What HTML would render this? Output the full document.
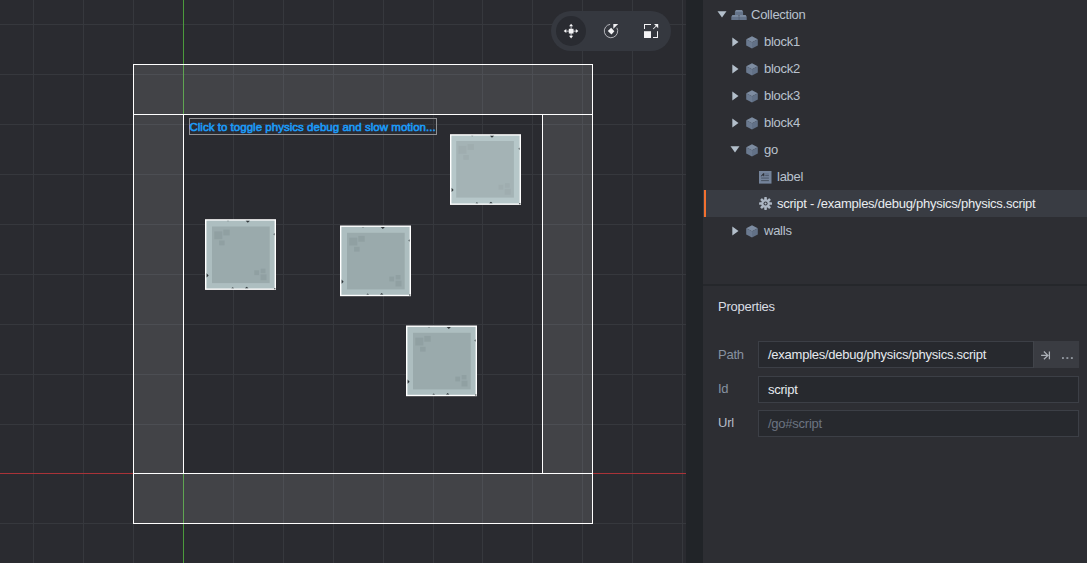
<!DOCTYPE html>
<html>
<head>
<meta charset="utf-8">
<title>Defold Editor</title>
<style>
*{box-sizing:border-box;margin:0;padding:0}
html,body{width:1087px;height:563px;overflow:hidden;background:#2a2b30}
body{position:relative;font-family:"Liberation Sans",sans-serif;font-size:13px;letter-spacing:-0.25px;color:#b9c2ce}
#scene{position:absolute;left:0;top:0;width:686px;height:563px;display:block}
#gutter{position:absolute;left:686px;top:0;width:17px;height:563px;background:#212428}
#panel{position:absolute;left:703px;top:0;width:384px;height:563px;background:#2d2e33}
#lbl{position:absolute;left:189px;top:118px;width:248px;height:17px;border:1px solid #8f9093;color:#1b9dfb;font-weight:400;font-size:11.5px;letter-spacing:0.03px;-webkit-text-stroke:0.55px #1b9dfb;line-height:17px;white-space:nowrap;text-indent:-0.6px}
.row{position:absolute;left:0;width:384px;height:27px;line-height:27px;white-space:nowrap}
.row span{position:absolute;top:0}
.row svg{position:absolute}
.sel{background:#393c43;color:#e9ecf0}
.sel:before{content:"";position:absolute;left:1px;top:0;width:2px;height:27px;background:#f2702f}
#divider{position:absolute;left:0;top:284px;width:384px;height:2px;background:#25272b}
.plabel{position:absolute;left:15px;color:#8792a1;height:27px;line-height:27px}
.field{position:absolute;left:55px;width:321px;height:27px;border:1px solid #3c3f46;background:#27292e;color:#e6e9ee;line-height:25px;padding-left:9px;white-space:nowrap}
#pbtn{position:absolute;left:330px;top:341px;width:46px;height:27px;background:#3a3c42;border-left:1px solid #41444a}
#pbtn svg{display:block;margin-left:-1px}
</style>
</head>
<body>
<svg id="scene" width="686" height="563" viewBox="0 0 686 563" shape-rendering="crispEdges">
<g><rect x="33" y="0" width="1" height="563" fill="#36383d" /><rect x="83" y="0" width="1" height="563" fill="#36383d" /><rect x="133" y="0" width="1" height="563" fill="#36383d" /><rect x="233" y="0" width="1" height="563" fill="#36383d" /><rect x="283" y="0" width="1" height="563" fill="#36383d" /><rect x="333" y="0" width="1" height="563" fill="#36383d" /><rect x="383" y="0" width="1" height="563" fill="#36383d" /><rect x="433" y="0" width="1" height="563" fill="#36383d" /><rect x="482" y="0" width="1" height="563" fill="#36383d" /><rect x="532" y="0" width="1" height="563" fill="#36383d" /><rect x="582" y="0" width="1" height="563" fill="#36383d" /><rect x="632" y="0" width="1" height="563" fill="#36383d" /><rect x="682" y="0" width="1" height="563" fill="#36383d" /><rect x="0" y="24" width="686" height="1" fill="#36383d" /><rect x="0" y="74" width="686" height="1" fill="#36383d" /><rect x="0" y="124" width="686" height="1" fill="#36383d" /><rect x="0" y="174" width="686" height="1" fill="#36383d" /><rect x="0" y="224" width="686" height="1" fill="#36383d" /><rect x="0" y="274" width="686" height="1" fill="#36383d" /><rect x="0" y="324" width="686" height="1" fill="#36383d" /><rect x="0" y="374" width="686" height="1" fill="#36383d" /><rect x="0" y="424" width="686" height="1" fill="#36383d" /><rect x="0" y="523" width="686" height="1" fill="#36383d" /></g>
<rect x="183" y="0" width="1" height="563" fill="#4b9a3c" />
<rect x="0" y="473" width="686" height="1" fill="#a93338" />
<rect x="133" y="64" width="460" height="51" fill="rgba(255,255,255,0.115)" />
<rect x="133" y="473" width="460" height="51" fill="rgba(255,255,255,0.115)" />
<rect x="133" y="114" width="51" height="360" fill="rgba(255,255,255,0.115)" />
<rect x="542" y="114" width="51" height="360" fill="rgba(255,255,255,0.115)" />
<rect x="133" y="64" width="460" height="1" fill="#ffffff" />
<rect x="133" y="114" width="460" height="1" fill="#ffffff" />
<rect x="133" y="473" width="460" height="1" fill="#ffffff" />
<rect x="133" y="523" width="460" height="1" fill="#ffffff" />
<rect x="133" y="64" width="1" height="460" fill="#ffffff" />
<rect x="592" y="64" width="1" height="460" fill="#ffffff" />
<rect x="183" y="114" width="1" height="360" fill="#ffffff" />
<rect x="542" y="114" width="1" height="360" fill="#ffffff" />
<g shape-rendering="geometricPrecision"><rect x="450" y="134.2" width="71" height="70.7" fill="#ffffff" /><rect x="451.4" y="135.6" width="68.2" height="67.9" fill="#b6c7c9" /><rect x="456.2" y="141" width="57.7" height="56.6" fill="#a4b3b5" /><rect x="458.5" y="145.9" width="8" height="7.8" fill="#9fadaf" /><rect x="467.5" y="144.1" width="6.4" height="5.8" fill="#9fadaf" /><rect x="463.3" y="155" width="5.5" height="4.8" fill="#9fadaf" /><rect x="498.5" y="184.8" width="4.8" height="4.8" fill="#9fadaf" /><rect x="504.9" y="183.2" width="4.8" height="4.5" fill="#9fadaf" /><rect x="504.7" y="188.9" width="6" height="5.8" fill="#9fadaf" /><path d="M489.9 135.7h4.2l-2.1 2z" fill="#2f3538"/><path d="M451.6 187.8v4.2l2 -2.1z" fill="#2f3538"/><path d="M489.2 203.3h3.4l-1.7 -1.5z" fill="#2f3538"/><path d="M475.6 203.3h2.6l-1.3 -1z" fill="#2f3538"/><path d="M519.5 147.4v2.6l-1 -1.3z" fill="#2f3538"/><path d="M471 135.7h2.4l-1.2 0.8z" fill="#2f3538" opacity=".5"/><rect x="519.2" y="203.1" width="1.2" height="1.2" fill="#2f3538"/></g>
<g shape-rendering="geometricPrecision"><rect x="205" y="219.2" width="71" height="70.7" fill="#ffffff" /><rect x="206.4" y="220.6" width="68.2" height="67.9" fill="#adbec0" /><rect x="212.0" y="226.5" width="57.7" height="56.6" fill="#9aaaac" /><rect x="214.3" y="231.4" width="8" height="7.8" fill="#90a0a2" /><rect x="223.3" y="229.6" width="6.4" height="5.8" fill="#90a0a2" /><rect x="219.10000000000002" y="240.5" width="5.5" height="4.8" fill="#90a0a2" /><rect x="254.3" y="270.3" width="4.8" height="4.8" fill="#90a0a2" /><rect x="260.7" y="268.7" width="4.8" height="4.5" fill="#90a0a2" /><rect x="260.5" y="274.4" width="6" height="5.8" fill="#90a0a2" /><path d="M245.70000000000002 220.7h4.2l-2.1 2z" fill="#2f3538"/><path d="M206.6 273.3v4.2l2 -2.1z" fill="#2f3538"/><path d="M245.0 288.3h3.4l-1.7 -1.5z" fill="#2f3538"/><path d="M231.4 288.3h2.6l-1.3 -1z" fill="#2f3538"/><path d="M274.5 232.9v2.6l-1 -1.3z" fill="#2f3538"/><path d="M226.8 220.7h2.4l-1.2 0.8z" fill="#2f3538" opacity=".5"/><rect x="274.2" y="288.1" width="1.2" height="1.2" fill="#2f3538"/></g>
<g shape-rendering="geometricPrecision"><rect x="340" y="225.5" width="71" height="70.7" fill="#ffffff" /><rect x="341.4" y="226.9" width="68.2" height="67.9" fill="#adbec0" /><rect x="347.0" y="232.8" width="57.7" height="56.6" fill="#9aaaac" /><rect x="349.3" y="237.70000000000002" width="8" height="7.8" fill="#90a0a2" /><rect x="358.3" y="235.9" width="6.4" height="5.8" fill="#90a0a2" /><rect x="354.1" y="246.8" width="5.5" height="4.8" fill="#90a0a2" /><rect x="389.3" y="276.6" width="4.8" height="4.8" fill="#90a0a2" /><rect x="395.7" y="275.0" width="4.8" height="4.5" fill="#90a0a2" /><rect x="395.5" y="280.7" width="6" height="5.8" fill="#90a0a2" /><path d="M380.7 227.0h4.2l-2.1 2z" fill="#2f3538"/><path d="M341.6 279.6v4.2l2 -2.1z" fill="#2f3538"/><path d="M380.0 294.6h3.4l-1.7 -1.5z" fill="#2f3538"/><path d="M366.40000000000003 294.6h2.6l-1.3 -1z" fill="#2f3538"/><path d="M409.5 239.20000000000002v2.6l-1 -1.3z" fill="#2f3538"/><path d="M361.8 227.0h2.4l-1.2 0.8z" fill="#2f3538" opacity=".5"/><rect x="409.2" y="294.4" width="1.2" height="1.2" fill="#2f3538"/></g>
<g shape-rendering="geometricPrecision"><rect x="406" y="325.5" width="71" height="70.7" fill="#ffffff" /><rect x="407.4" y="326.90000000000003" width="68.2" height="67.9" fill="#adbec0" /><rect x="413.0" y="332.8" width="57.7" height="56.6" fill="#9aaaac" /><rect x="415.3" y="337.7" width="8" height="7.8" fill="#90a0a2" /><rect x="424.3" y="335.90000000000003" width="6.4" height="5.8" fill="#90a0a2" /><rect x="420.1" y="346.8" width="5.5" height="4.8" fill="#90a0a2" /><rect x="455.3" y="376.6" width="4.8" height="4.8" fill="#90a0a2" /><rect x="461.7" y="375.0" width="4.8" height="4.5" fill="#90a0a2" /><rect x="461.5" y="380.7" width="6" height="5.8" fill="#90a0a2" /><path d="M446.7 327.0h4.2l-2.1 2z" fill="#2f3538"/><path d="M407.6 379.6v4.2l2 -2.1z" fill="#2f3538"/><path d="M446.0 394.6h3.4l-1.7 -1.5z" fill="#2f3538"/><path d="M432.40000000000003 394.6h2.6l-1.3 -1z" fill="#2f3538"/><path d="M475.5 339.2v2.6l-1 -1.3z" fill="#2f3538"/><path d="M427.8 327.0h2.4l-1.2 0.8z" fill="#2f3538" opacity=".5"/><rect x="475.2" y="394.4" width="1.2" height="1.2" fill="#2f3538"/></g>
<g shape-rendering="geometricPrecision"><rect x="551" y="11" width="120" height="40" rx="20" fill="#35383f"/><circle cx="571" cy="31" r="15" fill="#292b31"/><g fill="#f4f4f6" transform="translate(571.1 31.1)"><rect x="-4.9" y="-0.45" width="9.8" height="0.9" fill="#cfcfd4"/><rect x="-0.45" y="-4.9" width="0.9" height="9.8" fill="#cfcfd4"/><rect x="-2.3" y="-2.3" width="4.7" height="4.7"/><path d="M-7.4 0l2.6 -2v4z"/><path d="M7.3 0l-2.6 -2v4z"/><path d="M0 -7.4l-2 2.6h4z"/><path d="M0 7.3l-2 -2.6h4z"/></g><g transform="translate(611 31)"><path d="M-0.82 -6.65A6.7 6.7 0 1 0 5.86 -3.25" fill="none" stroke="#d4d4d9" stroke-width="0.8"/><path d="M0.15 -3.2L3.35 0.15L0.45 3.4L-3.2 -0.1z" fill="#f4f4f6"/><path d="M2.3 -7h4.9l-4.9 4.8z" fill="#f0f0f3"/></g><g fill="#f4f4f6"><rect x="644" y="31.2" width="7" height="6.8"/><rect x="644" y="24" width="7" height="1"/><rect x="644" y="24" width="1" height="5"/><rect x="657" y="31.2" width="1" height="6.8"/><rect x="653" y="37" width="5" height="1"/><path d="M654 24h4.2v4.2z"/><path d="M656.6 25l0.6 0.6-3.7 3.7-0.6-0.6z"/></g></g>
</svg>
<div id="lbl">Click to toggle physics debug and slow motion...</div>
<div id="gutter"></div>
<div id="panel">
<div class="row " style="top:1px"><svg style="left:14px;top:10px" width="10" height="7" viewBox="0 0 10 7"><path d="M0.5 0.3h9l-4.5 6.2z" fill="#b3bfcb"/></svg><svg style="left:28px;top:9px" width="16" height="11" viewBox="0 0 16 11"><path d="M4.9 0.1h6.2l1 1.8H3.9z" fill="#7b8a9f"/><rect x="3.9" y="1.9" width="8.2" height="3.1" fill="#65748a"/><path d="M1.3 5h6.3l0.3 1.9H0.3z" fill="#7b8a9f"/><rect x="0.3" y="6.9" width="7.6" height="3.1" fill="#65748a"/><path d="M8.4 5h6.3l1 1.9H8.15z" fill="#7b8a9f"/><rect x="8.15" y="6.9" width="7.55" height="3.1" fill="#65748a"/></svg><span style="left:48px">Collection</span></div>
<div class="row " style="top:28px"><svg style="left:28.5px;top:8.5px" width="7" height="10" viewBox="0 0 7 10"><path d="M0.3 0.5v9l6.2 -4.5z" fill="#b3bfcb"/></svg><svg style="left:43px;top:7.5px" width="12" height="13" viewBox="0 0 12 13"><path d="M6 0.2L11.8 3.2L6 6.2L0.2 3.2z" fill="#7d8ca1"/><path d="M0.2 3.2L6 6.2V12.6L0.2 9.5z" fill="#6b7a90"/><path d="M11.8 3.2L6 6.2V12.6L11.8 9.5z" fill="#627187"/></svg><span style="left:61px">block1</span></div>
<div class="row " style="top:55px"><svg style="left:28.5px;top:8.5px" width="7" height="10" viewBox="0 0 7 10"><path d="M0.3 0.5v9l6.2 -4.5z" fill="#b3bfcb"/></svg><svg style="left:43px;top:7.5px" width="12" height="13" viewBox="0 0 12 13"><path d="M6 0.2L11.8 3.2L6 6.2L0.2 3.2z" fill="#7d8ca1"/><path d="M0.2 3.2L6 6.2V12.6L0.2 9.5z" fill="#6b7a90"/><path d="M11.8 3.2L6 6.2V12.6L11.8 9.5z" fill="#627187"/></svg><span style="left:61px">block2</span></div>
<div class="row " style="top:82px"><svg style="left:28.5px;top:8.5px" width="7" height="10" viewBox="0 0 7 10"><path d="M0.3 0.5v9l6.2 -4.5z" fill="#b3bfcb"/></svg><svg style="left:43px;top:7.5px" width="12" height="13" viewBox="0 0 12 13"><path d="M6 0.2L11.8 3.2L6 6.2L0.2 3.2z" fill="#7d8ca1"/><path d="M0.2 3.2L6 6.2V12.6L0.2 9.5z" fill="#6b7a90"/><path d="M11.8 3.2L6 6.2V12.6L11.8 9.5z" fill="#627187"/></svg><span style="left:61px">block3</span></div>
<div class="row " style="top:109px"><svg style="left:28.5px;top:8.5px" width="7" height="10" viewBox="0 0 7 10"><path d="M0.3 0.5v9l6.2 -4.5z" fill="#b3bfcb"/></svg><svg style="left:43px;top:7.5px" width="12" height="13" viewBox="0 0 12 13"><path d="M6 0.2L11.8 3.2L6 6.2L0.2 3.2z" fill="#7d8ca1"/><path d="M0.2 3.2L6 6.2V12.6L0.2 9.5z" fill="#6b7a90"/><path d="M11.8 3.2L6 6.2V12.6L11.8 9.5z" fill="#627187"/></svg><span style="left:61px">block4</span></div>
<div class="row " style="top:136px"><svg style="left:27.3px;top:10px" width="10" height="7" viewBox="0 0 10 7"><path d="M0.5 0.3h9l-4.5 6.2z" fill="#b3bfcb"/></svg><svg style="left:43px;top:7.5px" width="12" height="13" viewBox="0 0 12 13"><path d="M6 0.2L11.8 3.2L6 6.2L0.2 3.2z" fill="#7d8ca1"/><path d="M0.2 3.2L6 6.2V12.6L0.2 9.5z" fill="#6b7a90"/><path d="M11.8 3.2L6 6.2V12.6L11.8 9.5z" fill="#627187"/></svg><span style="left:61px">go</span></div>
<div class="row " style="top:163px"><svg style="left:55.9px;top:7.6px" width="13" height="13" viewBox="0 0 13 13"><rect x="0" y="0" width="12.5" height="12.6" fill="#74839a"/><rect x="6.2" y="2.3" width="3.7" height="1.4" fill="#63718a"/><rect x="6.2" y="4.2" width="3.7" height="0.9" fill="#485365"/><rect x="2.1" y="6.3" width="7.8" height="1.6" fill="#5a677b"/><rect x="2.1" y="9.3" width="7.8" height="0.8" fill="#3b434f"/><path d="M1.7 5.2L4.2 2.2L5.3 2.2L5.3 5.2L4.3 5.2L4.3 4.4L3.4 4.4L2.9 5.2z" fill="#2c2f37"/></svg><span style="left:74px">label</span></div>
<div class="row sel" style="top:190px"><svg style="left:55.550000000000004px;top:7.45px" width="13.1" height="13.1" viewBox="-7 -7 14 14"><g fill="#adb7c4"><rect x="-1.4" y="-6.9" width="2.8" height="3.2" rx="0.7" transform="rotate(0)"/><rect x="-1.4" y="-6.9" width="2.8" height="3.2" rx="0.7" transform="rotate(45)"/><rect x="-1.4" y="-6.9" width="2.8" height="3.2" rx="0.7" transform="rotate(90)"/><rect x="-1.4" y="-6.9" width="2.8" height="3.2" rx="0.7" transform="rotate(135)"/><rect x="-1.4" y="-6.9" width="2.8" height="3.2" rx="0.7" transform="rotate(180)"/><rect x="-1.4" y="-6.9" width="2.8" height="3.2" rx="0.7" transform="rotate(225)"/><rect x="-1.4" y="-6.9" width="2.8" height="3.2" rx="0.7" transform="rotate(270)"/><rect x="-1.4" y="-6.9" width="2.8" height="3.2" rx="0.7" transform="rotate(315)"/></g><circle r="4.6" fill="#adb7c4"/><circle r="2.2" fill="#363940"/><circle r="1.1" fill="#b4bdc9"/></svg><span style="left:74px">script - /examples/debug/physics/physics.script</span></div>
<div class="row " style="top:217px"><svg style="left:28.5px;top:8.5px" width="7" height="10" viewBox="0 0 7 10"><path d="M0.3 0.5v9l6.2 -4.5z" fill="#b3bfcb"/></svg><svg style="left:43px;top:7.5px" width="12" height="13" viewBox="0 0 12 13"><path d="M6 0.2L11.8 3.2L6 6.2L0.2 3.2z" fill="#7d8ca1"/><path d="M0.2 3.2L6 6.2V12.6L0.2 9.5z" fill="#6b7a90"/><path d="M11.8 3.2L6 6.2V12.6L11.8 9.5z" fill="#627187"/></svg><span style="left:61px">walls</span></div>

<div id="divider"></div>
<div style="position:absolute;left:15px;top:293px;height:27px;line-height:27px;color:#d9dde4">Properties</div>
<div class="plabel" style="top:341px">Path</div>
<div class="field" style="top:341px;width:276px">/examples/debug/physics/physics.script</div>
<div id="pbtn"><svg width="46" height="27" viewBox="0 0 46 27"><g stroke="#adb1b8" stroke-width="1.25" fill="none"><path d="M8.1 14.4h6.4M10.9 10.5l4 3.9l-4 3.9M16.4 10.5v7.8"/></g><g fill="#9aa0a8"><rect x="29" y="16.2" width="1.9" height="1.7"/><rect x="33.4" y="16.2" width="1.9" height="1.7"/><rect x="37.9" y="16.2" width="1.9" height="1.7"/></g></svg></div>
<div class="plabel" style="top:375px">Id</div>
<div class="field" style="top:376px">script</div>
<div class="plabel" style="top:409px;color:#b4bcc8">Url</div>
<div class="field" style="top:410px;color:#6c7481">/go#script</div>

</div>
</body>
</html>
